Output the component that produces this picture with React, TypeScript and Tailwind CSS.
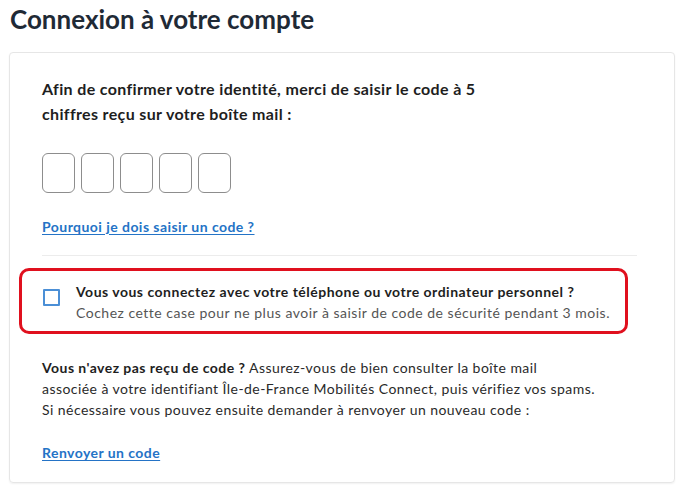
export default function App() {
  return (
    <div className="w-[687px] h-[491px] bg-white overflow-hidden" style={{ fontFamily: "Lato, 'Open Sans', sans-serif" }}>
      <h1 className="pl-[10px] pt-[3px] text-[26px] leading-[32px] font-bold text-[#1f2a36]">Connexion à votre compte</h1>
      <div className="mt-[17px] ml-[9px] w-[666px] border border-[#e6e6e6] rounded-[4px] shadow-[0_1px_2px_rgba(0,0,0,0.06)] pl-[32px] pr-[37px] pt-[23px] pb-[19px]">
        <p className="text-[16px] leading-[25px] font-bold tracking-[0.35px] text-[#1e1e1e]">
          Afin de confirmer votre identité, merci de saisir le code à 5<br />chiffres reçu sur votre boîte mail :
        </p>
        <div className="mt-[27px] flex gap-[6px] pl-[0px]">
          {[0, 1, 2, 3, 4].map((i) => (
            <div key={i} className="w-[33px] h-[40px] border-[1.5px] border-[#8d8d8d] rounded-[6px]" />
          ))}
        </div>
        <div className="mt-[23px] leading-[20px]">
          <a className="text-[14px] font-bold tracking-[0.45px] text-[#2473c6] underline underline-offset-2">Pourquoi je dois saisir un code ?</a>
        </div>
        <div className="mt-[18px] h-px bg-[#ececec]" />
        <div className="mt-[12px] -ml-[23px] w-[609px] border-[3px] border-[#e0101e] rounded-[10px] pl-[21px] pt-[10px] pb-[8px] flex gap-[16px]">
          <div className="mt-[8px] w-[17px] h-[17px] border-[2px] border-[#4b8fd6] rounded-[1px] shrink-0" />
          <div className="text-[14px] leading-[21px] tracking-[0.5px]">
            <div className="font-bold text-[#1e1e1e]">Vous vous connectez avec votre téléphone ou votre ordinateur personnel ?</div>
            <div className="text-[#555555]">Cochez cette case pour ne plus avoir à saisir de code de sécurité pendant 3 mois.</div>
          </div>
        </div>
        <p className="mt-[24px] text-[14px] leading-[20.75px] tracking-[0.45px] text-[#2a2a2a]">
          <span className="font-bold text-[#1e1e1e]">Vous n'avez pas reçu de code ?</span> Assurez-vous de bien consulter la boîte mail<br />
          associée à votre identifiant Île-de-France Mobilités Connect, puis vérifiez vos spams.<br />
          Si nécessaire vous pouvez ensuite demander à renvoyer un nouveau code :
        </p>
        <div className="mt-[22px] leading-[20px]">
          <a className="text-[14px] font-bold tracking-[0.45px] text-[#2473c6] underline underline-offset-2">Renvoyer un code</a>
        </div>
      </div>
    </div>
  );
}
